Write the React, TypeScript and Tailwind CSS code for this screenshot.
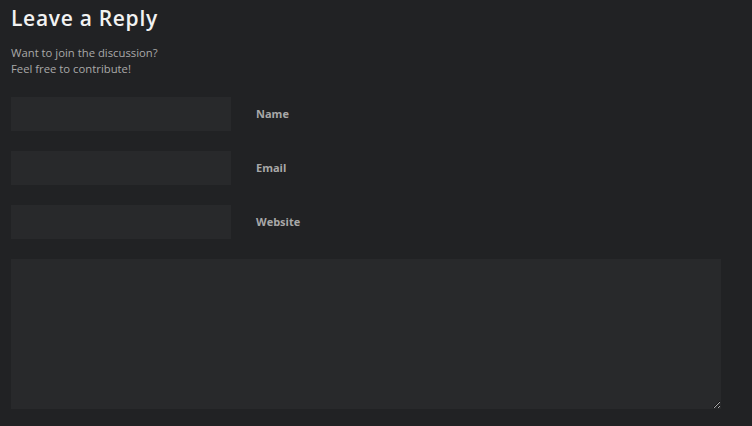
import React from "react";

export default function App() {
  const fields = ["Name", "Email", "Website"];
  return (
    <div className="min-h-[426px] w-full bg-[#212224] px-[11px] pt-[4px]" style={{ fontFamily: '"Open Sans", sans-serif' }}>
      <h3 className="text-[21px] font-semibold leading-[28px] tracking-[0.7px] text-[#f2f2f2]">Leave a Reply</h3>
      <p className="mt-[13px] text-[11.3px] leading-[16px] text-[#a9a9a9]">
        Want to join the discussion?
        <br />
        Feel free to contribute!
      </p>
      <form className="mt-[20px] flex flex-col">
        {fields.map((f) => (
          <div key={f} className="mb-[20px] flex items-center">
            <input className="h-[34px] w-[220px] bg-[#28292b] outline-none" />
            <label className="ml-[25px] text-[11px] font-bold text-[#a8a8a8]">{f}</label>
          </div>
        ))}
        <textarea className="block h-[150px] w-[710px] bg-[#28292b] outline-none" />
      </form>
    </div>
  );
}
